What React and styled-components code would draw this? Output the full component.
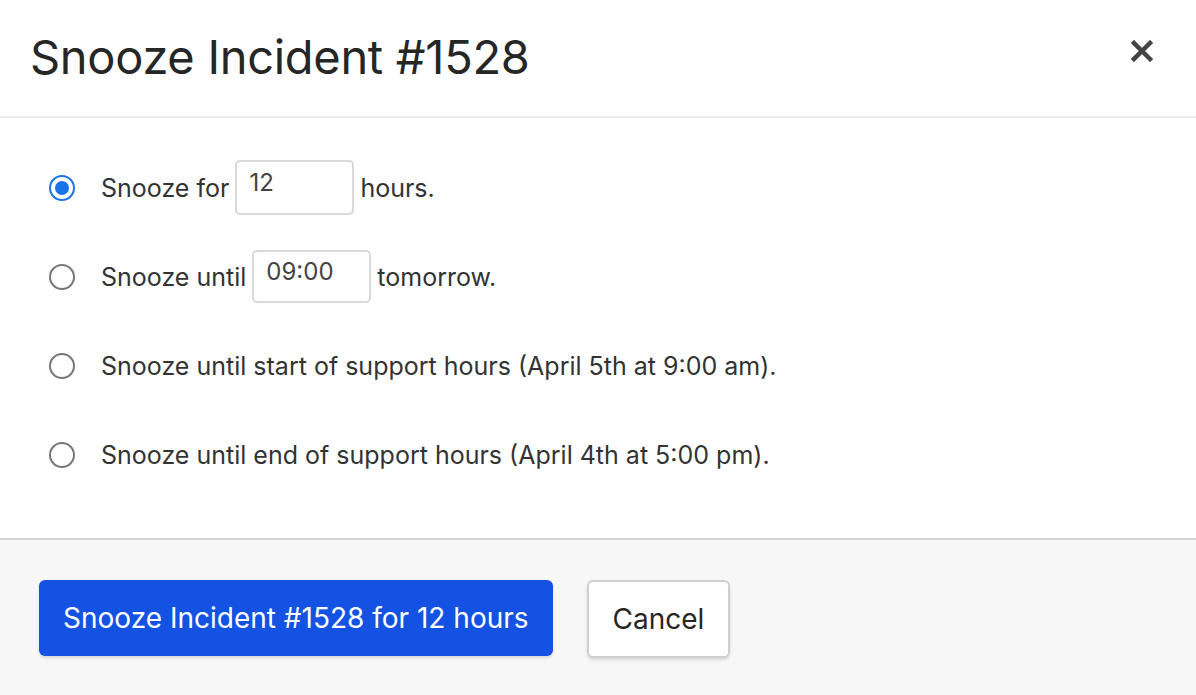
import React, { useState } from "react";
import styled, { createGlobalStyle } from "styled-components";

const GlobalStyle = createGlobalStyle`
  html, body {
    margin: 0;
    padding: 0;
    background: #fff;
    font-family: Inter, "Liberation Sans", sans-serif;
    color: #2b2b2b;
  }
`;

const Modal = styled.div`
  width: 1196px;
  height: 695px;
  display: flex;
  flex-direction: column;
  background: #fff;
  overflow: hidden;
`;

const Header = styled.header`
  height: 116px;
  flex: none;
  display: flex;
  align-items: center;
  justify-content: space-between;
  padding: 0 42px 0 30px;
  border-bottom: 2px solid #ececec;
`;

const Title = styled.h1`
  margin: 0;
  font-size: 47px;
  font-weight: 400;
  color: #262626;
  letter-spacing: -0.3px;
  padding-bottom: 4px;
`;

const Close = styled.button`
  border: 0;
  background: none;
  padding: 0;
  width: 24px;
  height: 24px;
  display: flex;
  align-items: center;
  justify-content: center;
  cursor: pointer;
  margin-top: -14px;
`;

const Body = styled.div`
  flex: 1;
  display: flex;
  flex-direction: column;
  padding: 25px 0 0 49px;
`;

const Row = styled.label`
  height: 89px;
  display: flex;
  align-items: center;
  font-size: 25px;
  color: #333;
`;

const Radio = styled.span`
  width: 26px;
  height: 26px;
  box-sizing: border-box;
  border-radius: 50%;
  border: 2px solid ${(p) => (p.$checked ? "#1a73e8" : "#777")};
  margin-right: 26px;
  flex: none;
  display: flex;
  align-items: center;
  justify-content: center;
  &::after {
    content: "";
    width: 14px;
    height: 14px;
    border-radius: 50%;
    background: #1a73e8;
    display: ${(p) => (p.$checked ? "block" : "none")};
  }
`;

const Field = styled.input`
  width: 119px;
  height: ${(p) => p.$h}px;
  box-sizing: border-box;
  border: 2px solid #d9d9d9;
  border-radius: 5px;
  font: inherit;
  font-size: 24px;
  color: #444;
  padding: 0 12px 10px;
  margin: 0 6px 0 6px;
  outline: none;
`;

const Footer = styled.footer`
  height: 155px;
  flex: none;
  display: flex;
  align-items: center;
  gap: 34px;
  padding: 0 0 0 39px;
  background: #f7f7f7;
  border-top: 2px solid #d4d4d4;
`;

const Button = styled.button`
  height: ${(p) => (p.$primary ? 76 : 78)}px;
  box-sizing: border-box;
  padding: 0 24px;
  font: inherit;
  font-size: 28px;
  border-radius: 6px;
  cursor: pointer;
  background: ${(p) => (p.$primary ? "#1352e2" : "#fff")};
  color: ${(p) => (p.$primary ? "#fff" : "#262626")};
  border: ${(p) => (p.$primary ? "none" : "2px solid #cfcfcf")};
  box-shadow: 0 2px 3px rgba(0, 0, 0, 0.12);
  margin-top: ${(p) => (p.$primary ? 0 : 3)}px;
`;

const options = [
  { key: "for" },
  { key: "until" },
  { key: "start", text: "Snooze until start of support hours (April 5th at 9:00 am)." },
  { key: "end", text: "Snooze until end of support hours (April 4th at 5:00 pm)." },
];

export default function App() {
  const [choice, setChoice] = useState("for");
  const [hours, setHours] = useState("12");
  const [time, setTime] = useState("09:00");

  const renderText = (o) => {
    if (o.key === "for") {
      return (
        <>
          Snooze for
          <Field $h={55} value={hours} onChange={(e) => setHours(e.target.value)} />
          hours.
        </>
      );
    }
    if (o.key === "until") {
      return (
        <>
          Snooze until
          <Field $h={53} value={time} onChange={(e) => setTime(e.target.value)} />
          tomorrow.
        </>
      );
    }
    return o.text;
  };

  return (
    <Modal>
      <GlobalStyle />
      <Header>
        <Title>Snooze Incident #1528</Title>
        <Close aria-label="Close">
          <svg width="22" height="22" viewBox="0 0 22 22">
            <path d="M3 3 L19 19 M19 3 L3 19" stroke="#444" strokeWidth="4.5" strokeLinecap="square" />
          </svg>
        </Close>
      </Header>
      <Body>
        {options.map((o) => (
          <Row key={o.key} onClick={() => setChoice(o.key)}>
            <Radio $checked={choice === o.key} />
            {renderText(o)}
          </Row>
        ))}
      </Body>
      <Footer>
        <Button $primary>Snooze Incident #1528 for {hours} hours</Button>
        <Button>Cancel</Button>
      </Footer>
    </Modal>
  );
}
